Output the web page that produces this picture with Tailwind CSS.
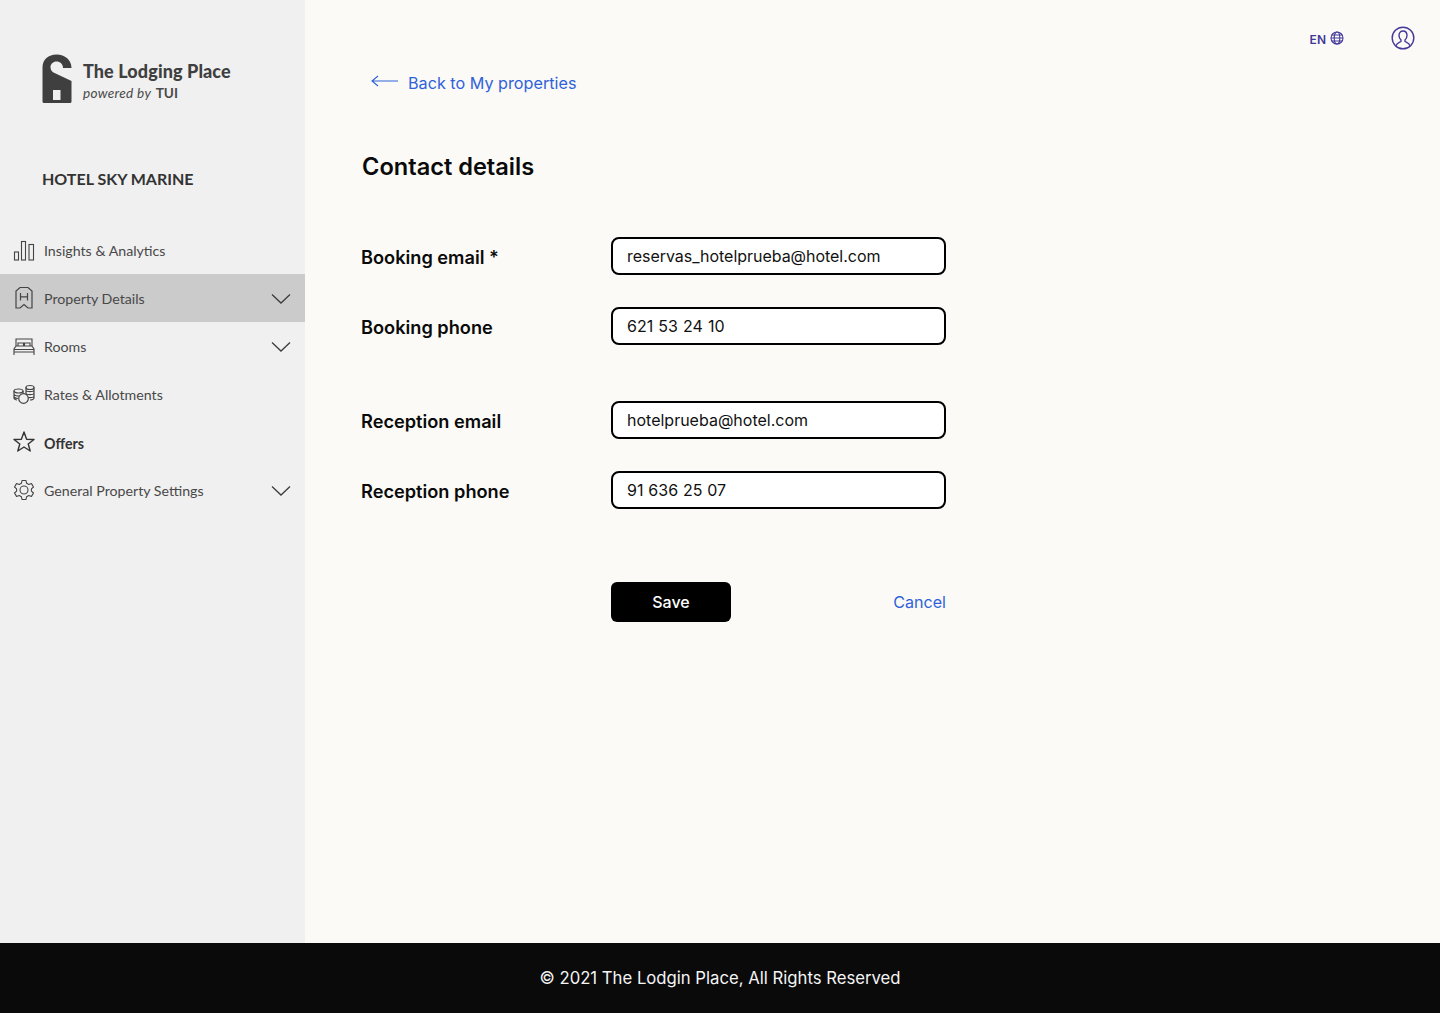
<!DOCTYPE html>
<html lang="en">
<head>
<meta charset="utf-8">
<title>Contact details</title>
<script src="https://cdn.jsdelivr.net/npm/@tailwindcss/browser@4"></script>
</head>
<body class="m-0 bg-[#fbfaf7]">
<div class="flex h-[1013px] w-[1440px] flex-col overflow-hidden font-['Inter',sans-serif]">
  <div class="flex h-[943px] w-full">
    <!-- Sidebar -->
    <aside class="flex h-full w-[305px] shrink-0 flex-col bg-[#f0f0f0] font-['Lato',sans-serif] text-[#484848]">
      <div class="flex h-[226px] flex-col pl-[42px]">
        <div class="mt-[54px] flex items-start">
          <svg class="h-[49px] w-[30px] shrink-0" viewBox="0 0 30 49">
            <path fill="#3f3f3f" d="M0.5 47.5V13.500C0.5 5.500 6.500 0.500 14.500 0.500C23 0.500 29.500 6 29.500 14H21C21 10 18 7.500 14.500 7.500C11 7.500 8.500 10 8.500 13C8.500 15.500 9.500 17.500 11.500 18.500L29.500 27V47.500C29.500 48.300 29 49 28 49H2C1 49 0.500 48.300 0.500 47.500Z"/>
            <rect x="11" y="36" width="7.500" height="10" fill="#f0f0f0"/>
          </svg>
          <div class="ml-[11px] mt-[6px] flex flex-col">
            <span class="text-[18px] font-black leading-[22px] tracking-[0.1px] text-[#3f3f3f]">The Lodging Place</span>
            <span class="text-[13.6px] leading-[22px] text-[#4a4a4a]"><em class="tracking-[0.3px]">powered by</em> <span class="ml-[1px] font-bold">TUI</span></span>
          </div>
        </div>
        <div class="mt-[63px] text-[16px] font-bold leading-[24px] text-[#333]">HOTEL SKY MARINE</div>
      </div>
      <nav class="flex flex-col text-[14.2px]">
        <a class="flex h-12 items-center pl-[13px] pr-[14px]">
          <svg class="mr-[9px] h-[24px] w-[22px]" viewBox="0 0 22 24" fill="none" stroke="#444" stroke-width="1.1"><rect x="1.500" y="14" width="4" height="8"/><rect x="8.500" y="3.500" width="4" height="18.500"/><rect x="16" y="6.500" width="4.500" height="15.500"/></svg>
          <span class="mt-[2px]">Insights &amp; Analytics</span>
        </a>
        <a class="flex h-12 items-center bg-[#cbcbcb] pl-[13px] pr-[14px]">
          <svg class="mr-[9px] h-[24px] w-[22px]" viewBox="0 0 22 24" fill="none" stroke="#444" stroke-width="1.2"><path d="M3 22V5L7 1.500H15L19 5V22H15L11 18.500L7 22Z"/><path d="M7.500 7V14.500M14.500 7V14.500M7.500 10.800H14.500"/></svg>
          <span class="mt-[2px]">Property Details</span>
          <svg class="ml-auto mt-[1px] h-[12px] w-[20px]" viewBox="0 0 20 12" fill="none" stroke="#3d3d3d" stroke-width="1.3"><path d="M1 1.500L10 10L19 1.500"/></svg>
        </a>
        <a class="flex h-12 items-center pl-[13px] pr-[14px]">
          <svg class="mr-[9px] h-[24px] w-[22px]" viewBox="0 0 22 24" fill="none" stroke="#444" stroke-width="1.1"><path d="M3 12V5H19V12M1 18V15L3 12H19L21 15V18M1 15.500H21M1 18H21M1 18V21M21 18V21M5 12V9H10.500V12M11.500 12V9H17V12"/></svg>
          <span class="mt-[2px]">Rooms</span>
          <svg class="ml-auto mt-[1px] h-[12px] w-[20px]" viewBox="0 0 20 12" fill="none" stroke="#3d3d3d" stroke-width="1.3"><path d="M1 1.500L10 10L19 1.500"/></svg>
        </a>
        <a class="flex h-12 items-center pl-[13px] pr-[14px]">
          <svg class="mr-[9px] h-[24px] w-[22px]" viewBox="0 0 22 24" fill="none" stroke="#444" stroke-width="1.2"><ellipse cx="17" cy="5.500" rx="4" ry="2"/><path d="M13 5.500V17M21 5.500V16C21 17 19 18 17 18M13 8.500C14 10 20 10 21 8.500M13 11.500C14 13 20 13 21 11.500M13 14.500C14 16 20 16 21 14.500"/><ellipse cx="5.500" cy="9" rx="4.500" ry="2"/><path d="M1 9V16C1 17 2.500 18 4 18M10 9V11M1 12.500C2 14 4 14 6 14M1 15C2 16 3 16.500 5 16.500"/><circle cx="10.500" cy="16.500" r="4.800" fill="#f0f0f0"/></svg>
          <span class="mt-[2px]">Rates &amp; Allotments</span>
        </a>
        <a class="flex h-12 items-center pl-[13px] pr-[14px]">
          <svg class="mr-[9px] h-[24px] w-[22px]" viewBox="0 0 22 24" fill="none" stroke="#333" stroke-width="1.4"><path d="M11 2L13.600 9.200L21 9.500L15.200 14L17.200 21L11 17L4.800 21L6.800 14L1 9.500L8.400 9.200Z" stroke-linejoin="round"/></svg>
          <span class="mt-[3px] font-bold text-[#333]">Offers</span>
        </a>
        <a class="flex h-12 items-center pl-[13px] pr-[14px]">
          <svg class="mr-[9px] h-[24px] w-[22px]" viewBox="0 0 22 24" fill="none" stroke="#444" stroke-width="1.1"><circle cx="11" cy="12" r="4"/><path stroke-linejoin="round" d="M9 2.500H13L13.600 5.300L15.800 6.500L18.500 5.600L20.500 9L18.400 10.900V13.100L20.500 15L18.500 18.400L15.800 17.500L13.600 18.700L13 21.500H9L8.400 18.700L6.200 17.500L3.500 18.400L1.500 15L3.600 13.100V10.900L1.500 9L3.500 5.600L6.200 6.500L8.400 5.300Z"/></svg>
          <span class="mt-[2px]">General Property Settings</span>
          <svg class="ml-auto mt-[1px] h-[12px] w-[20px]" viewBox="0 0 20 12" fill="none" stroke="#3d3d3d" stroke-width="1.3"><path d="M1 1.500L10 10L19 1.500"/></svg>
        </a>
      </nav>
    </aside>
    <!-- Main -->
    <main class="relative flex-1 bg-[#fbfaf7]">
      <div class="absolute right-[25px] top-[25px] flex h-[26px] items-center text-[#43399a]">
        <span class="mt-[4px] text-[12px] font-semibold leading-[20px]">EN</span>
        <svg class="ml-[4px] h-[14px] w-[14px]" viewBox="0 0 14 14" fill="none" stroke="currentColor" stroke-width="1.1"><circle cx="7" cy="7" r="6"/><ellipse cx="7" cy="7" rx="2.800" ry="6"/><path d="M1 7H13M1.800 4H12.200M1.800 10H12.200"/></svg>
        <svg class="ml-[47px] h-[24px] w-[24px]" viewBox="0 0 24 24" fill="none" stroke="currentColor" stroke-width="1.4"><circle cx="12" cy="12" r="10.800"/><path d="M5 20C5.500 17 8.500 16.500 10 15.500V14C8.500 12.500 8 11 8 9.500C8 6.800 9.700 5 12 5C14.300 5 16 6.800 16 9.500C16 11 15.500 12.500 14 14V15.500C15.500 16.500 18.500 17 19 20"/></svg>
      </div>
      <div class="ml-[56px] flex flex-col">
        <a class="mt-[71px] flex h-6 items-center text-[#2f62d9]">
          <svg class="ml-[10px] mr-[10px] -mt-[4px] h-[12px] w-[27px]" viewBox="0 0 27 12" fill="none" stroke="currentColor" stroke-width="1.1"><path d="M7 1L1 6L7 11M1 6H27"/></svg>
          <span class="text-[16.2px] font-normal leading-6">Back to My properties</span>
        </a>
        <h1 class="mt-[56px] pl-[1px] text-[23.6px] font-semibold leading-[32px] text-[#0a0a0a]">Contact details</h1>
        <form class="mt-[54px] flex flex-col">
          <div class="flex h-[38px] items-center">
            <label class="w-[250px] pt-[2px] text-[18.2px] font-semibold leading-[36px] text-[#0a0a0a]">Booking email *</label>
            <div class="flex h-[38px] w-[335px] items-center rounded-[8px] border-2 border-black bg-white px-[14px] text-[16px] tracking-[-0.03px] text-[#111]">reservas_hotelprueba@hotel.com</div>
          </div>
          <div class="mt-[32px] flex h-[38px] items-center">
            <label class="w-[250px] pt-[2px] text-[18.2px] font-semibold leading-[36px] text-[#0a0a0a]">Booking phone</label>
            <div class="flex h-[38px] w-[335px] items-center rounded-[8px] border-2 border-black bg-white px-[14px] text-[16px] text-[#111] [word-spacing:0.6px]">621 53 24 10</div>
          </div>
          <div class="mt-[56px] flex h-[38px] items-center">
            <label class="w-[250px] pt-[2px] text-[18.2px] font-semibold leading-[36px] text-[#0a0a0a]">Reception email</label>
            <div class="flex h-[38px] w-[335px] items-center rounded-[8px] border-2 border-black bg-white px-[14px] text-[16px] text-[#111]">hotelprueba@hotel.com</div>
          </div>
          <div class="mt-[32px] flex h-[38px] items-center">
            <label class="w-[250px] pt-[2px] text-[18.2px] font-semibold leading-[36px] text-[#0a0a0a]">Reception phone</label>
            <div class="flex h-[38px] w-[335px] items-center rounded-[8px] border-2 border-black bg-white px-[14px] text-[16px] text-[#111] [word-spacing:0.4px]">91 636 25 07</div>
          </div>
          <div class="ml-[250px] mt-[73px] flex w-[335px] items-center justify-between">
            <button type="button" class="h-[40px] w-[120px] rounded-[6px] bg-black text-[16px] font-medium text-white">Save</button>
            <a class="text-[16.1px] text-[#2f62d9]">Cancel</a>
          </div>
        </form>
      </div>
    </main>
  </div>
  <footer class="flex h-[70px] w-full items-center justify-center bg-[#0a0a0a] pt-[1px] text-[16.7px] text-[#f5f5f5]">© 2021 The Lodgin Place, All Rights Reserved</footer>
</div>
</body>
</html>
